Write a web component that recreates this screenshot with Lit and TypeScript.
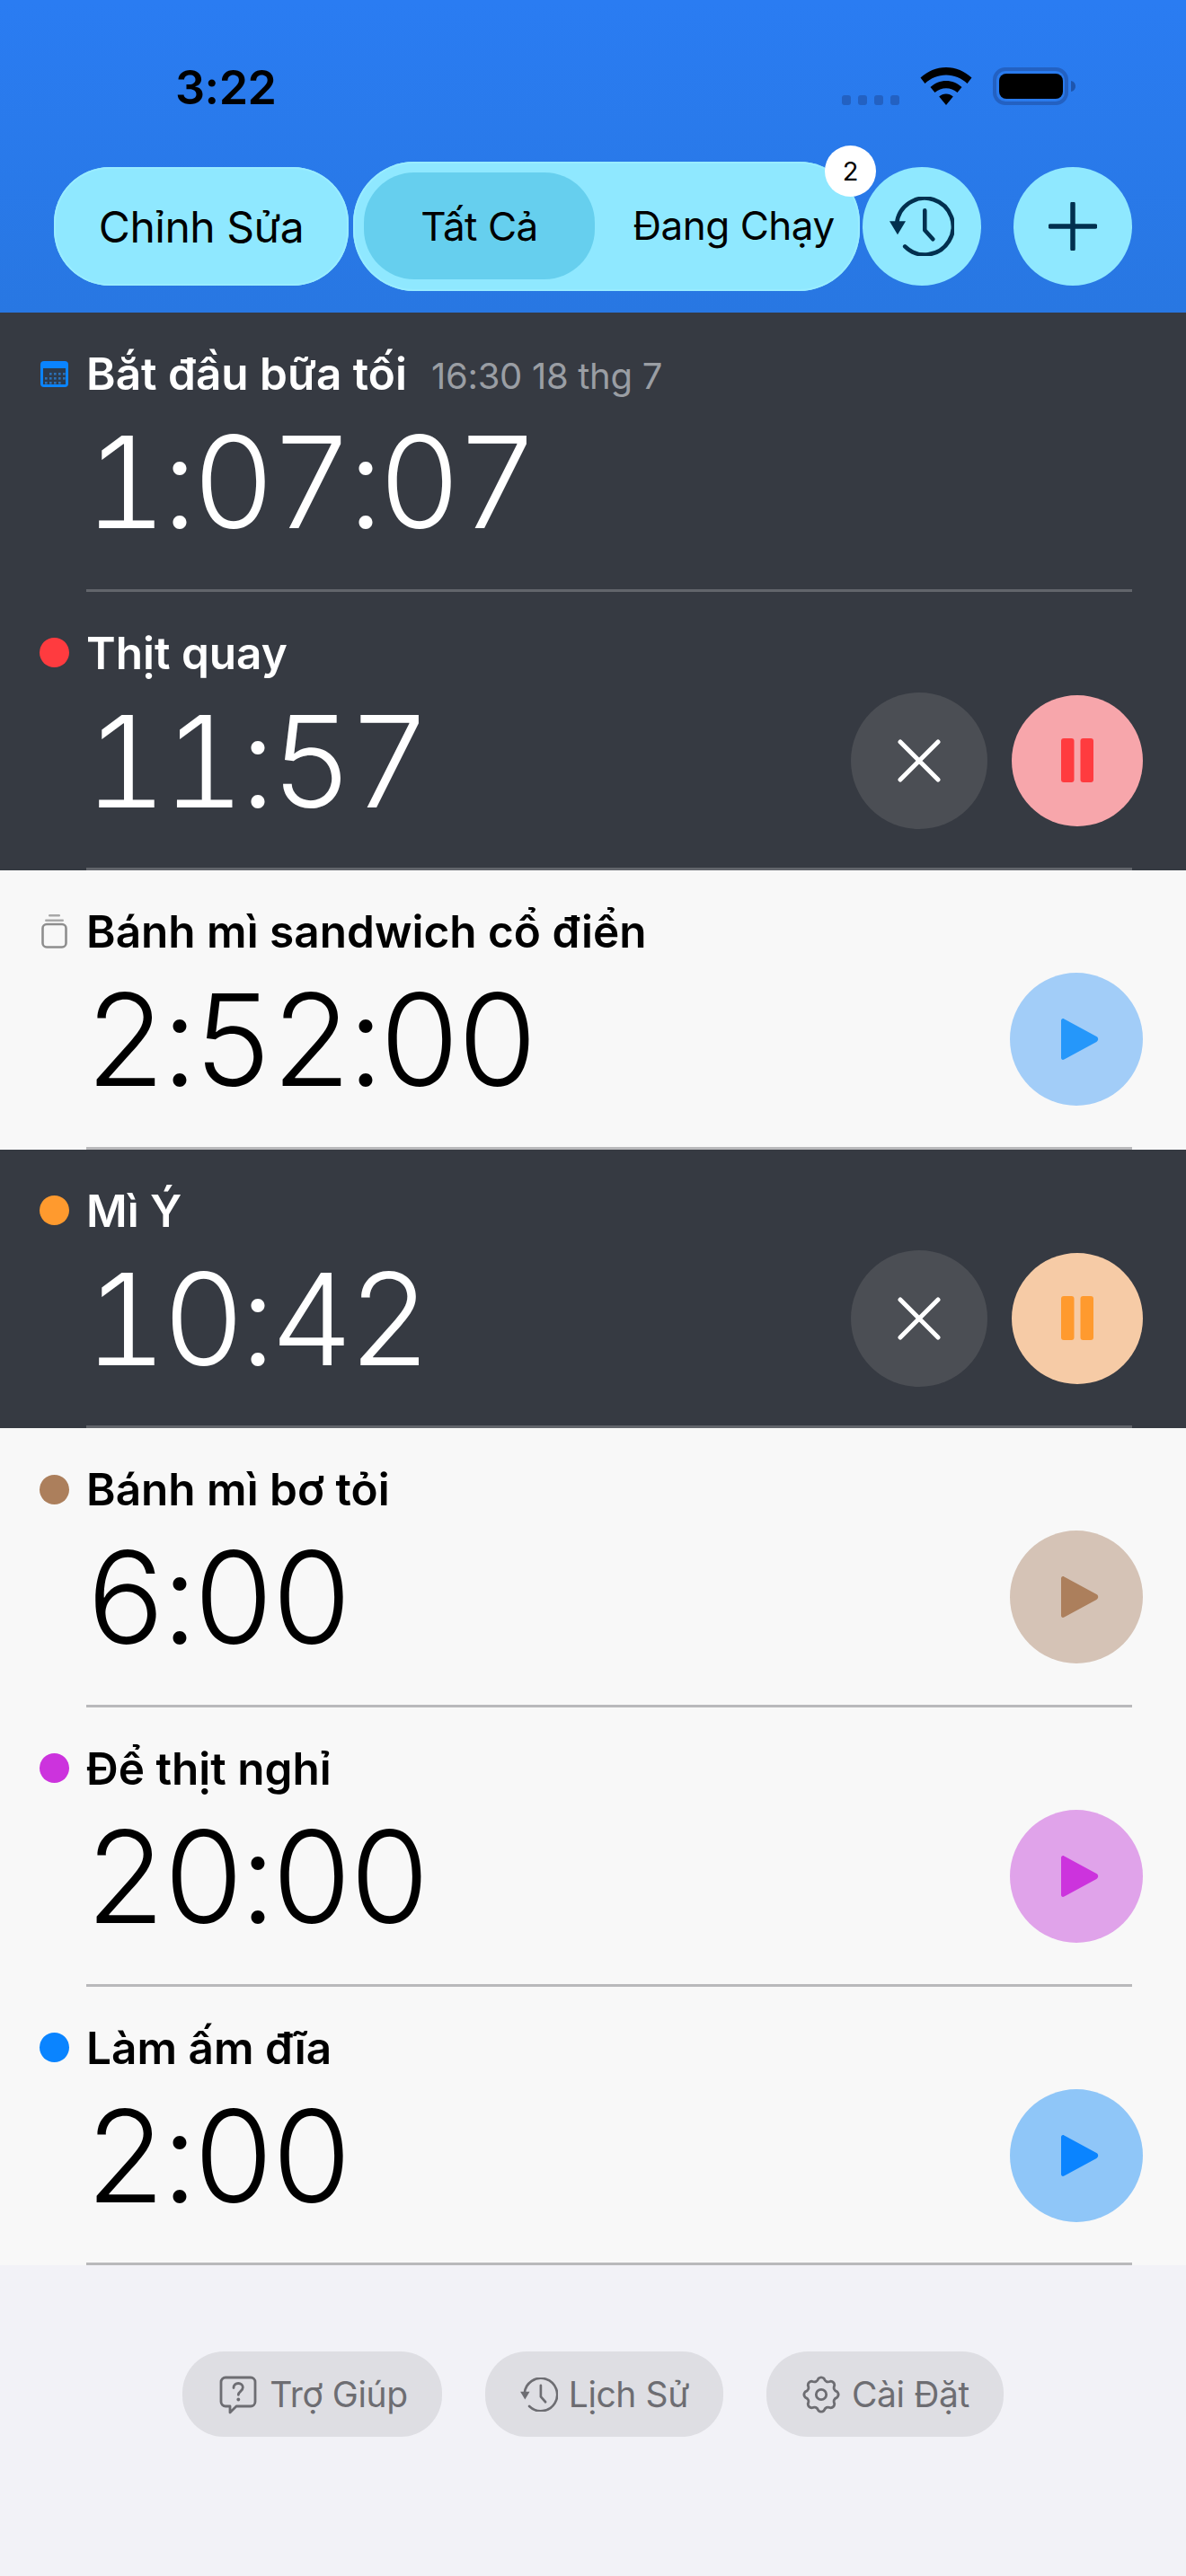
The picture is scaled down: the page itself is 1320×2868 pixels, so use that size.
import { LitElement, html, css, svg } from 'lit';
import { customElement } from 'lit/decorators.js';

type Timer = {
  title: string;
  time: string;
  color: string;
  tint: string;
  dark?: boolean;
  icon?: 'calendar' | 'jar';
  meta?: string;
  hideAction?: boolean;
};

const TIMERS: Timer[] = [
  { title: 'Bắt đầu bữa tối', time: '1:07:07', color: '#0a84ff', tint: '', dark: true, icon: 'calendar', meta: '16:30 18 thg 7', hideAction: true },
  { title: 'Thịt quay', time: '11:57', color: '#ff3b3f', tint: '#f7a6ab', dark: true },
  { title: 'Bánh mì sandwich cổ điển', time: '2:52:00', color: '#2597fa', tint: '#a2cdf8', icon: 'jar' },
  { title: 'Mì Ý', time: '10:42', color: '#ff9a2e', tint: '#f6cba6', dark: true },
  { title: 'Bánh mì bơ tỏi', time: '6:00', color: '#ac7f5c', tint: '#d5c3b6' },
  { title: 'Để thịt nghỉ', time: '20:00', color: '#cc33dd', tint: '#e0a3ea' },
  { title: 'Làm ấm đĩa', time: '2:00', color: '#0a84ff', tint: '#8fc6f8' },
];

// gear outline with 8 rounded teeth, computed so the footer icon stays a real path
function gearPath(cx: number, cy: number) {
  const teeth = 8;
  const pts: string[] = [];
  for (let i = 0; i < teeth; i++) {
    const a = (i / teeth) * Math.PI * 2 - Math.PI / 2;
    const step = (Math.PI * 2) / teeth;
    const at = (r: number, o: number) =>
      `${(cx + r * Math.cos(a + o * step)).toFixed(2)} ${(cy + r * Math.sin(a + o * step)).toFixed(2)}`;
    pts.push(`${i === 0 ? 'M' : 'L'}${at(11.5, -0.22)}`);
    pts.push(`Q${at(13, 0)} ${at(11.5, 0.22)}`);
    pts.push(`Q${at(8.6, 0.5)} ${at(11.5, 0.78)}`);
  }
  return pts.join(' ') + 'Z';
}

const historyIcon = (stroke: string, width: number) => svg`
  <path d="M4.900 18.500A19.200 19.200 0 1 1 10.500 33.700" fill="none" stroke=${stroke} stroke-width=${width} stroke-linecap="round"/>
  <path d="M0 16.500h11l-5.500 9.200z" fill=${stroke}/>
  <path d="M24 9.200v13.400l5.500 6.100" fill="none" stroke=${stroke} stroke-width=${width} stroke-linecap="round" stroke-linejoin="round"/>
`;

@customElement('app-root')
export class AppRoot extends LitElement {
  static styles = css`
    :host {
      display: block;
      width: 1320px;
      height: 2868px;
      background: #f2f2f7;
      font-family: Inter, 'Noto Sans', sans-serif;
      color: #000;
    }

    svg {
      display: block;
    }

    .header {
      height: 348px;
      box-sizing: border-box;
      background: linear-gradient(#2a7cf2, #2877e2);
    }

    .status {
      height: 180px;
      display: flex;
      align-items: flex-start;
    }

    .clock {
      margin: 69px 0 0 195px;
      font-size: 52px;
      line-height: 58px;
      font-weight: 600;
      letter-spacing: -0.5px;
    }

    .status-icons {
      margin: 75px 0 0 auto;
      padding-right: 121px;
      display: flex;
      align-items: flex-end;
      gap: 23px;
    }

    .signal {
      display: flex;
      gap: 8px;
    }

    .signal i {
      width: 10px;
      height: 11px;
      border-radius: 3px;
      background: #2361c2;
    }

    .nav {
      height: 144px;
      display: flex;
      align-items: center;
      padding-left: 60px;
    }

    .pill {
      width: 328px;
      height: 132px;
      border-radius: 62px;
      background: #8fe8ff;
      box-shadow: inset 0 0 0 2px #99ecff;
      display: flex;
      align-items: center;
      justify-content: center;
      font-size: 48px;
      letter-spacing: -0.5px;
    }

    .segments {
      position: relative;
      width: 564px;
      height: 144px;
      margin-left: 5px;
      box-sizing: border-box;
      padding: 12px 0 13px 12px;
      border-radius: 68px;
      background: #8fe8ff;
      box-shadow: inset 0 0 0 2px #99ecff;
      display: flex;
      font-size: 44px;
      letter-spacing: -0.5px;
    }

    .segment {
      display: flex;
      align-items: center;
      justify-content: center;
    }

    .segment.on {
      width: 257px;
      border-radius: 56px;
      background: #66cfee;
    }

    .segment.off {
      width: 295px;
      padding: 0 0 2px 14px;
      box-sizing: border-box;
    }

    .badge {
      position: absolute;
      top: -18px;
      right: -18px;
      width: 57px;
      height: 57px;
      border-radius: 50%;
      background: #fff;
      display: flex;
      align-items: center;
      justify-content: center;
      font-size: 29px;
      letter-spacing: 0;
    }

    .round {
      width: 132px;
      height: 132px;
      border-radius: 50%;
      background: #8fe8ff;
      display: flex;
      align-items: center;
      justify-content: center;
      margin-left: 36px;
    }

    .round.history {
      margin-left: 3px;
    }

    .row {
      height: 310.6px;
      display: flex;
      flex-direction: column;
      background: #f8f8f8;
      color: #000;
    }

    .row.dark {
      background: #363a42;
      color: #fff;
    }

    .head {
      display: flex;
      align-items: center;
      height: 56px;
      padding: 40px 0 0 44px;
    }

    .marker {
      width: 33px;
      height: 33px;
      margin-right: 21px;
      flex: none;
    }

    .marker.jar {
      height: 40px;
    }

    .dot {
      border-radius: 50%;
    }

    .title {
      font-size: 49.5px;
      font-weight: 600;
      line-height: 56px;
      margin-left: -2px;
    }

    .meta {
      margin: 5px 0 0 27px;
      font-size: 40px;
      letter-spacing: -0.3px;
      color: #9a9ea4;
    }

    .main {
      height: 184px;
      display: flex;
      align-items: center;
      padding: 0 48px 0 94px;
    }

    .time {
      font-size: 142px;
      font-weight: 300;
      letter-spacing: -5px;
      line-height: 160px;
      font-feature-settings: 'tnum' 1;
    }

    .actions {
      margin-left: auto;
      display: flex;
      align-items: center;
      gap: 27px;
    }

    .btn {
      width: 148px;
      height: 148px;
      border-radius: 50%;
      display: flex;
      align-items: center;
      justify-content: center;
    }

    .btn.pause {
      width: 146px;
      height: 146px;
    }

    .btn.cancel {
      width: 152px;
      height: 152px;
      background: #4b4e54;
    }

    .play {
      margin-left: 6px;
    }

    .rule {
      margin: auto 60px 0 96px;
      height: 3px;
      background: #b9b9bb;
    }

    .dark .rule {
      background: #62656b;
    }

    .footer {
      display: flex;
      justify-content: center;
      gap: 48px;
      padding-top: 96px;
    }

    .link {
      height: 95px;
      box-sizing: border-box;
      padding: 0 38px 0 39px;
      border-radius: 46px;
      background: #dedee3;
      display: flex;
      align-items: center;
      gap: 12px;
      font-size: 39px;
      letter-spacing: -0.4px;
      color: #6d6d72;
    }
  `;

  private renderMarker(t: Timer) {
    if (t.icon === 'calendar') {
      const dots = [];
      for (let y = 15; y <= 25; y += 5) {
        for (let x = 6; x <= 26; x += 5) {
          if ((y === 15 && x < 11) || (y === 25 && x > 21)) continue;
          dots.push(svg`<rect x=${x} y=${y} width="2.6" height="2.6" fill="#2b6fb5"/>`);
        }
      }
      return html`<svg class="marker" viewBox="0 0 33 33">
        <path d="M5 2h23a4 4 0 0 1 4 4v21a4 4 0 0 1-4 4H5a4 4 0 0 1-4-4V6a4 4 0 0 1 4-4z" fill="#0a84ff"/>
        <rect x="4" y="10" width="25" height="18" fill="#2c3a4c"/>
        ${dots}
      </svg>`;
    }
    if (t.icon === 'jar') {
      return html`<svg class="marker jar" viewBox="0 0 33 40">
        <rect x="10" y="1" width="13" height="2.6" rx="1.3" fill="#a8a8a8"/>
        <rect x="6" y="6.5" width="21" height="2.6" rx="1.3" fill="#a8a8a8"/>
        <rect x="3.5" y="12" width="26" height="25.5" rx="4.5" fill="none" stroke="#8e8e8e" stroke-width="2.6"/>
      </svg>`;
    }
    return html`<div class="marker dot" style="background:${t.color}"></div>`;
  }

  private renderActions(t: Timer) {
    if (t.hideAction) return null;
    return html`<div class="actions">
      ${t.dark
        ? html`<div class="btn cancel">
            <svg width="48" height="48" viewBox="0 0 48 48">
              <path d="M3 3l42 42M45 3L3 45" stroke="#fff" stroke-width="5" stroke-linecap="round" />
            </svg>
          </div>`
        : null}
      <div class="btn ${t.dark ? 'pause' : ''}" style="background:${t.tint}">
        ${t.dark
          ? html`<svg width="36" height="49" viewBox="0 0 36 49">
              <rect width="14.5" height="49" rx="3" fill=${t.color} />
              <rect x="21.5" width="14.5" height="49" rx="3" fill=${t.color} />
            </svg>`
          : html`<svg class="play" width="46" height="50" viewBox="0 0 46 50">
              <path d="M3 4.500v41c0 2 1.600 3 3.400 2l36-19.600c2.400-1.400 2.400-4.400 0-5.800L6.400 2.500C4.600 1.500 3 2.500 3 4.500z" fill=${t.color} />
            </svg>`}
      </div>
    </div>`;
  }

  render() {
    return html`
      <div class="header">
        <div class="status">
          <div class="clock">3:22</div>
          <div class="status-icons">
            <div class="signal"><i></i><i></i><i></i><i></i></div>
            <svg width="58" height="42" viewBox="0 0 58 42">
              <path d="M29 0C18 0 8.500 4.300 0.500 11.500L5.500 18C12 12 20 8.500 29 8.500S46 12 52.500 18L57.500 11.500C49.500 4.300 40 0 29 0Z" fill="#000"/>
              <path d="M29 15C22.500 15 16.500 17.500 11.500 22L16.500 28C20 25 24.500 23.300 29 23.300S38 25 41.500 28L46.500 22C41.500 17.500 35.500 15 29 15Z" fill="#000"/>
              <path d="M29 29.500C26 29.500 23.500 30.500 21.200 32.500L29 42L36.800 32.500C34.500 30.500 32 29.500 29 29.500Z" fill="#000"/>
            </svg>
            <svg width="94" height="42" viewBox="0 0 94 42">
              <rect x="2" y="2" width="80" height="38" rx="12" fill="none" stroke="#2361c2" stroke-width="4"/>
              <rect x="7" y="7" width="71" height="28" rx="8" fill="#000"/>
              <path d="M87 15c3.500 .8 5 3 5 6s-1.500 5.200-5 6z" fill="#1e55ad"/>
            </svg>
          </div>
        </div>
        <div class="nav">
          <div class="pill">Chỉnh Sửa</div>
          <div class="segments">
            <div class="segment on">Tất Cả</div>
            <div class="segment off">Đang Chạy</div>
            <div class="badge">2</div>
          </div>
          <div class="round history">
            <svg width="72" height="66" viewBox="0 0 44 40">${historyIcon('#02304f', 2.8)}</svg>
          </div>
          <div class="round">
            <svg width="54" height="54" viewBox="0 0 54 54">
              <path d="M27 2v50M2 27h50" stroke="#02304f" stroke-width="5.500" stroke-linecap="round"/>
            </svg>
          </div>
        </div>
      </div>

      ${TIMERS.map(
        (t) => html`
          <div class="row ${t.dark ? 'dark' : ''}">
            <div class="head">
              ${this.renderMarker(t)}
              <div class="title">${t.title}</div>
              ${t.meta ? html`<div class="meta">${t.meta}</div>` : null}
            </div>
            <div class="main">
              <div class="time">${t.time}</div>
              ${this.renderActions(t)}
            </div>
            <div class="rule"></div>
          </div>
        `
      )}

      <div class="footer">
        <div class="link">
          <svg width="46" height="44" viewBox="0 0 44 44">
            <path d="M8 3h28a5 5 0 0 1 5 5v22a5 5 0 0 1-5 5H20l-7 7v-7H8a5 5 0 0 1-5-5V8a5 5 0 0 1 5-5z" fill="none" stroke="#6d6d72" stroke-width="2.800" stroke-linejoin="round"/>
            <path d="M17 14.500c0-3 2.300-5 5.200-5s5.100 1.900 5.100 4.600c0 4.200-5 4.200-5 8.200" fill="none" stroke="#6d6d72" stroke-width="2.800" stroke-linecap="round"/>
            <circle cx="22.300" cy="27.500" r="1.900" fill="#6d6d72"/>
          </svg>
          Trợ Giúp
        </div>
        <div class="link">
          <svg width="42" height="38" viewBox="0 0 44 40">${historyIcon('#6d6d72', 2.8)}</svg>
          Lịch Sử
        </div>
        <div class="link">
          <svg width="44" height="44" viewBox="0 0 28 28">
            <path d=${gearPath(14, 14)} fill="none" stroke="#6d6d72" stroke-width="1.800" stroke-linejoin="round"/>
            <circle cx="14" cy="14" r="3.600" fill="none" stroke="#6d6d72" stroke-width="1.800"/>
          </svg>
          Cài Đặt
        </div>
      </div>
    `;
  }
}
